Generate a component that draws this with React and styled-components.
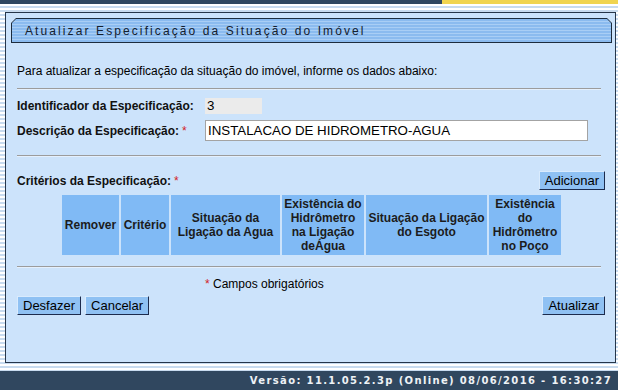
import React from "react"
import styled, { createGlobalStyle } from "styled-components"

const Global = createGlobalStyle`
  html, body {
    margin: 0;
    padding: 0;
  }
  body {
    font-family: "Liberation Sans", Arial, sans-serif;
    background: repeating-linear-gradient(to bottom, #ffffff 0 2px, #c8dbef 2px 4px);
  }
`

const Page = styled.div`
  width: 618px;
  height: 390px;
  display: flex;
  flex-direction: column;
`

const TopBar = styled.div`
  height: 4px;
  background: linear-gradient(to right, #2f4760 0 442px, #f0d450 442px);
`

const Panel = styled.div`
  margin: 8px 2px 0 5px;
  height: 349px;
  border: 1px solid #26364a;
  background: #cce3fb;
  display: flex;
  flex-direction: column;
`

const TabOuter = styled.div`
  margin: 5px 3px 0 5px;
  padding: 1px;
  background: #1d2c3d;
  clip-path: polygon(5px 0, calc(100% - 5px) 0, 100% 5px, 100% 100%, 0 100%, 0 5px);
`

const Tab = styled.div`
  height: 23px;
  display: flex;
  align-items: center;
  padding-left: 13px;
  font-size: 12px;
  letter-spacing: 2.1px;
  color: #14202e;
  background: repeating-linear-gradient(to bottom, #8bbbef 0 2px, #a9cef5 2px 3px);
  clip-path: polygon(4px 0, calc(100% - 4px) 0, 100% 4px, 100% 100%, 0 100%, 0 4px);
`

const Content = styled.div`
  padding: 0 10px 0 11px;
  font-size: 12px;
  color: #000;
`

const Intro = styled.div`
  margin-top: 20px;
  line-height: 16px;
`

const Rule = styled.div`
  margin: ${p => p.$top}px 4px 0 0;
  border-top: 1px solid #9c9c9c;
  border-bottom: 1px solid #e4f0fd;
`

const FieldRow = styled.div`
  display: grid;
  grid-template-columns: 188px 1fr;
  align-items: center;
  margin-top: ${p => p.$top}px;
`

const Label = styled.span`
  font-weight: bold;
  color: #111;
`

const Req = styled.span`
  color: #d21f1f;
  font-weight: normal;
  margin-left: ${p => (p.$lead ? 0 : 3)}px;
`

const ReadOnly = styled.div`
  width: 55px;
  height: 16px;
  padding-left: 2px;
  background: #ebebeb;
  font-size: 13.3px;
  line-height: 16px;
`

const Input = styled.input`
  box-sizing: border-box;
  width: 383px;
  height: 21px;
  padding: 0 2px;
  border: 1px solid #a3a3a3;
  background: #fff;
  font-family: "Liberation Sans", Arial, sans-serif;
  font-size: 13.3px;
  color: #000;
  outline: none;
`

const SplitRow = styled.div`
  display: flex;
  justify-content: space-between;
  align-items: center;
  margin-top: ${p => p.$top}px;
`

const Button = styled.button`
  height: 19px;
  padding: 0 5px;
  font-family: "Liberation Sans", Arial, sans-serif;
  font-size: 13px;
  color: #000;
  background: #8fc1f3;
  border-style: solid;
  border-width: 1px;
  border-color: #d9ebfd #1c2b4d #1c2b4d #d9ebfd;
  border-radius: 0;
  cursor: pointer;
`

const Grid = styled.div`
  display: grid;
  grid-template-columns: 57px 48px 109px 82px 121px 72px;
  column-gap: 2px;
  margin: 5px 0 0 45px;
  height: 60px;
`

const HeadCell = styled.div`
  background: #80baf5;
  display: flex;
  align-items: center;
  justify-content: center;
  text-align: center;
  white-space: pre-line;
  font-weight: bold;
  line-height: 14px;
  color: #1c1c1c;
`

const Note = styled.div`
  margin-top: 8px;
  padding-left: 188px;
  line-height: 16px;
`

const Actions = styled.div`
  display: flex;
  align-items: center;
  gap: 4px;
  margin-top: 4px;
`

const Spacer = styled.div`
  flex: 1;
`

const Footer = styled.div`
  margin-top: auto;
  height: 19px;
  background: #30475f;
  display: flex;
  align-items: center;
  justify-content: flex-end;
  padding-right: 6px;
  font-family: "DejaVu Sans", Verdana, sans-serif;
  font-weight: bold;
  font-size: 10px;
  letter-spacing: 1.35px;
  color: #eef2f6;
`

const columns = [
  "Remover",
  "Critério",
  "Situação da\nLigação da Agua",
  "Existência do\nHidrômetro\nna Ligação\ndeÁgua",
  "Situação da Ligação\ndo Esgoto",
  "Existência\ndo\nHidrômetro\nno Poço",
]

export default function App() {
  return (
    <Page>
      <Global />
      <TopBar />
      <Panel>
        <TabOuter>
          <Tab>Atualizar Especificação da Situação do Imóvel</Tab>
        </TabOuter>
        <Content>
          <Intro>
            Para atualizar a especificação da situação do imóvel, informe os dados abaixo:
          </Intro>
          <Rule $top={9} />
          <FieldRow $top={8}>
            <Label>Identificador da Especificação:</Label>
            <ReadOnly>3</ReadOnly>
          </FieldRow>
          <FieldRow $top={6}>
            <Label>
              Descrição da Especificação:<Req>*</Req>
            </Label>
            <Input defaultValue="INSTALACAO DE HIDROMETRO-AGUA" />
          </FieldRow>
          <Rule $top={14} />
          <SplitRow $top={14}>
            <Label>
              Critérios da Especificação:<Req>*</Req>
            </Label>
            <Button>Adicionar</Button>
          </SplitRow>
          <Grid>
            {columns.map(c => (
              <HeadCell key={c}>{c}</HeadCell>
            ))}
          </Grid>
          <Rule $top={11} />
          <Note>
            <Req $lead>*</Req> Campos obrigatórios
          </Note>
          <Actions>
            <Button>Desfazer</Button>
            <Button>Cancelar</Button>
            <Spacer />
            <Button>Atualizar</Button>
          </Actions>
        </Content>
      </Panel>
      <Footer>Versão: 11.1.05.2.3p (Online) 08/06/2016 - 16:30:27</Footer>
    </Page>
  )
}
